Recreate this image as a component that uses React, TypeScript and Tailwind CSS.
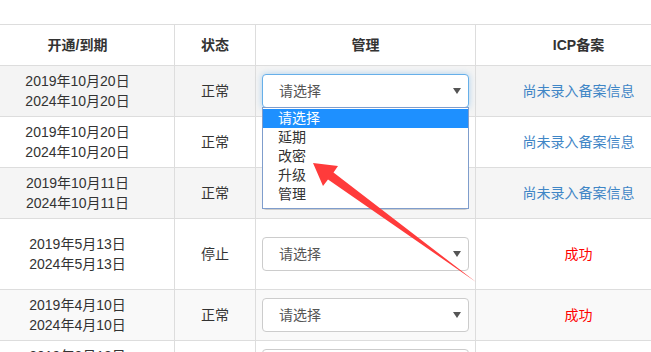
import React from "react";

type Row = {
  d1: string;
  d2: string;
  status: string;
  icp: "none" | "ok";
  h: string;
  bg: string;
  focused?: boolean;
};

const rows: Row[] = [
  { d1: "2019年10月20日", d2: "2024年10月20日", status: "正常", icp: "none", h: "h-[51px]", bg: "bg-[#f4f4f4]", focused: true },
  { d1: "2019年10月20日", d2: "2024年10月20日", status: "正常", icp: "none", h: "h-[51px]", bg: "bg-white" },
  { d1: "2019年10月11日", d2: "2024年10月11日", status: "正常", icp: "none", h: "h-[51px]", bg: "bg-[#f5f5f5]" },
  { d1: "2019年5月13日", d2: "2024年5月13日", status: "停止", icp: "ok", h: "h-[71px]", bg: "bg-white" },
  { d1: "2019年4月10日", d2: "2024年4月10日", status: "正常", icp: "ok", h: "h-[51px]", bg: "bg-[#f9f9f9]" },
  { d1: "2019年3月18日", d2: "2024年3月18日", status: "正常", icp: "ok", h: "h-[51px]", bg: "bg-white" },
];

function Select({ focused }: { focused?: boolean }) {
  return (
    <div
      className={
        "relative w-[207px] h-[34px] rounded-[4px] bg-white flex items-center pl-[16px] text-[14px] text-[#555] " +
        (focused
          ? "border border-[#66afe9] shadow-[0_0_6px_rgba(102,175,233,0.5)]"
          : "border border-[#cccccc]")
      }
    >
      <span>请选择</span>
      <span className="absolute right-[7px] top-1/2 -translate-y-1/2 w-0 h-0 border-l-[4px] border-r-[4px] border-t-[6px] border-l-transparent border-r-transparent border-t-[#555]" />
    </div>
  );
}

export default function App() {
  return (
    <div
      className="relative w-[651px] h-[352px] overflow-hidden bg-white text-[#333] text-[14px]"
      style={{ fontFamily: '"Liberation Sans", "Noto Sans CJK SC", sans-serif' }}
    >
      <div className="pt-[24px] w-[700px] ml-[-19px]">
        {/* header */}
        <div className="grid grid-cols-[193px_81px_220px_206px] h-[41px] border-t border-[#ddd] font-bold">
          <div className="flex items-center justify-center">开通/到期</div>
          <div className="flex items-center justify-center border-l border-[#ddd]">状态</div>
          <div className="flex items-center justify-center border-l border-[#ddd]">管理</div>
          <div className="flex items-center justify-center border-l border-[#ddd]">ICP备案</div>
        </div>
        {rows.map((r, i) => (
          <div
            key={i}
            className={"grid grid-cols-[193px_81px_220px_206px] border-t border-[#ddd] " + r.h + " " + r.bg}
          >
            <div className="flex flex-col items-center justify-center leading-[20px]">
              <span>{r.d1}</span>
              <span>{r.d2}</span>
            </div>
            <div className="flex items-center justify-center border-l border-[#ddd]">{r.status}</div>
            <div className="flex items-center justify-center border-l border-[#ddd]">
              <Select focused={r.focused} />
            </div>
            <div className="flex items-center justify-center border-l border-[#ddd]">
              {r.icp === "none" ? (
                <span className="text-[#3f86c6]">尚未录入备案信息</span>
              ) : (
                <span className="text-[#ff0000]">成功</span>
              )}
            </div>
          </div>
        ))}
      </div>

      {/* open dropdown list */}
      <div className="absolute left-[262px] top-[107px] w-[207px] h-[102px] bg-white border border-[#7f9dcc] text-[14px] text-[#333] pt-[1px]">
        <div className="h-[19px] leading-[19px] pl-[15px] bg-[#1e90ff] text-white">请选择</div>
        <div className="h-[19px] leading-[19px] pl-[15px]">延期</div>
        <div className="h-[19px] leading-[19px] pl-[15px]">改密</div>
        <div className="h-[19px] leading-[19px] pl-[15px]">升级</div>
        <div className="h-[19px] leading-[19px] pl-[15px]">管理</div>
      </div>

      {/* red annotation arrow */}
      <svg className="absolute left-0 top-0 pointer-events-none" width="651" height="352" viewBox="0 0 651 352">
        <polygon
          points="313,163 338,166 333.5,172.5 476,282 328,179.5 323,186"
          fill="#ff3b3b"
        />
      </svg>
    </div>
  );
}
